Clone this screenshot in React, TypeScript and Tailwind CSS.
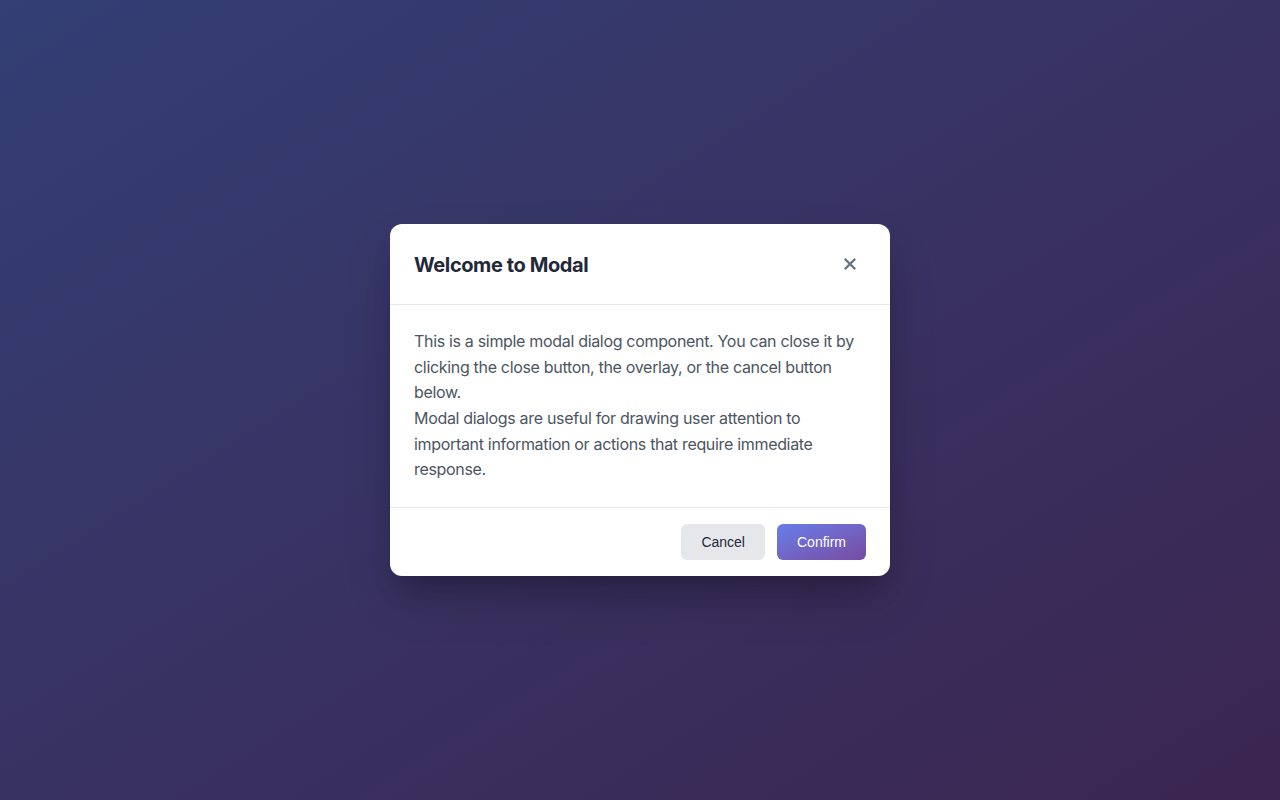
import * as React from 'react';

export default function App() {
  return (
    <div className="relative h-[800px] w-full overflow-hidden bg-gradient-to-br from-[#667eea] to-[#764ba2] font-['Inter',sans-serif]">
      {/* Overlay */}
      <div className="flex h-full w-full items-center justify-center bg-black/50">
        <div className="w-[500px] overflow-hidden rounded-xl bg-white shadow-[0_20px_25px_-5px_rgba(0,0,0,0.1),0_10px_10px_-5px_rgba(0,0,0,0.04),0_25px_50px_-12px_rgba(0,0,0,0.25)]">
          {/* Header */}
          <div className="flex items-center justify-between border-b border-[#e5e7eb] px-6 py-6">
            <h2 className="pt-px text-xl leading-7 font-bold tracking-[-0.02em] text-[#1f2937]">
              Welcome to Modal
            </h2>
            <button className="flex h-8 w-8 items-center justify-center rounded text-[#6b7280]">
              <svg width="12" height="12" viewBox="0 0 12 12" fill="none">
                <path d="M1.5 1.5l9 9M10.5 1.5l-9 9" stroke="currentColor" strokeWidth="2.4" strokeLinecap="round" />
              </svg>
            </button>
          </div>

          {/* Body */}
          <div className="p-6 text-base leading-[1.6] tracking-[-0.02em] text-[#4b5563]">
            <p>
              This is a simple modal dialog component. You can close it by clicking the close
              button, the overlay, or the cancel button below.
            </p>
            <p>
              Modal dialogs are useful for drawing user attention to important information or
              actions that require immediate response.
            </p>
          </div>

          {/* Footer */}
          <div className="flex justify-end gap-3 border-t border-[#e5e7eb] px-6 py-4">
            <button className="h-9 rounded-md bg-[#e5e7eb] px-5 font-['Liberation_Sans',Arial,sans-serif] text-sm text-[#1f2937]">
              Cancel
            </button>
            <button className="h-9 rounded-md bg-gradient-to-br from-[#667eea] to-[#764ba2] px-5 font-['Liberation_Sans',Arial,sans-serif] text-sm text-white">
              Confirm
            </button>
          </div>
        </div>
      </div>
    </div>
  );
}
